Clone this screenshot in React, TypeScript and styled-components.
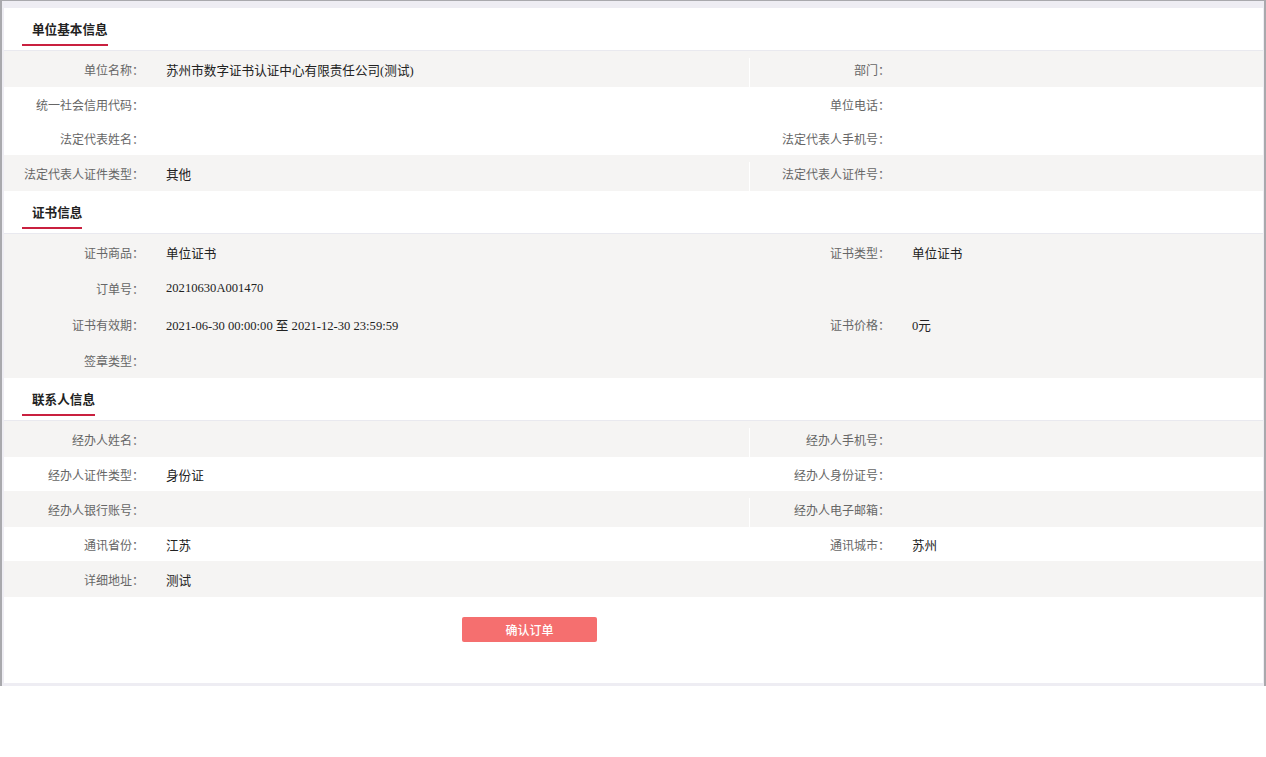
import React from "react";
import styled, { createGlobalStyle, css } from "styled-components";

const GlobalStyle = createGlobalStyle`
  html, body {
    margin: 0;
    padding: 0;
    background: #fff;
  }
  body {
    font-family: "Liberation Serif", "Noto Sans CJK SC", serif;
  }
`;

const Frame = styled.div`
  width: 1266px;
  box-sizing: border-box;
  border-top: 1px solid #a9a9ad;
  border-left: 2px solid #a9a9ad;
  border-right: 2px solid #a9a9ad;
  background: #eeedf3;
  padding: 7px 1px 3px 2px;
`;

const Content = styled.div`
  background: #fff;
`;

const SectionHeader = styled.div`
  height: 42px;
  border-bottom: 1px solid #e9e9ef;
  display: flex;
  align-items: flex-start;
`;

const Title = styled.h3`
  margin: 0 0 0 18px;
  padding: 12px 0 6px 10px;
  line-height: 18px;
  font-size: 12.6px;
  font-weight: bold;
  color: #222;
  font-family: "Noto Sans CJK SC", sans-serif;
  border-bottom: 2px solid #c9203f;
`;

const Row = styled.div<{ $gray?: boolean }>`
  display: flex;
  align-items: center;
  height: ${(p) => (p.$gray ? 36 : 34)}px;
  background: ${(p) => (p.$gray ? "#f5f4f3" : "#fff")};
`;

const Half = styled.div<{ $right?: boolean; $divider?: boolean }>`
  position: relative;
  display: flex;
  align-items: center;
  height: 100%;
  ${(p) =>
    p.$right
      ? css`
          flex: 1;
          padding-left: 1px;
        `
      : css`
          width: 745px;
          flex: none;
        `}
  ${(p) =>
    p.$divider &&
    css`
      &::before {
        content: "";
        position: absolute;
        left: 0;
        top: 7px;
        bottom: 0;
        width: 1px;
        background: #fff;
      }
    `}
`;

const Label = styled.span`
  width: 140px;
  flex: none;
  text-align: right;
  font-size: 12px;
  color: #666;
  font-family: "Noto Sans CJK SC", sans-serif;
  white-space: nowrap;
`;

const Value = styled.span`
  padding-left: 22px;
  font-size: 12.6px;
  color: #222;
  white-space: nowrap;
`;

const Footer = styled.div`
  height: 86px;
  box-sizing: border-box;
  padding: 20px 0 0 458px;
`;

const ConfirmButton = styled.button`
  width: 135px;
  height: 25px;
  border: none;
  border-radius: 2px;
  background: #f56f6f;
  color: #fff;
  font-size: 12px;
  font-weight: 500;
  font-family: "Noto Sans CJK SC", sans-serif;
  cursor: pointer;
  padding: 0;
`;

type Cell = [string, string?];
type RowData = { gray?: boolean; divider?: boolean; left: Cell; right?: Cell };

const unitRows: RowData[] = [
  { gray: true, divider: true, left: ["单位名称：", "苏州市数字证书认证中心有限责任公司(测试)"], right: ["部门："] },
  { left: ["统一社会信用代码："], right: ["单位电话："] },
  { left: ["法定代表姓名："], right: ["法定代表人手机号："] },
  { gray: true, divider: true, left: ["法定代表人证件类型：", "其他"], right: ["法定代表人证件号："] },
];

const certRows: RowData[] = [
  { gray: true, left: ["证书商品：", "单位证书"], right: ["证书类型：", "单位证书"] },
  { gray: true, left: ["订单号：", "20210630A001470"] },
  { gray: true, left: ["证书有效期：", "2021-06-30 00:00:00 至 2021-12-30 23:59:59"], right: ["证书价格：", "0元"] },
  { gray: true, left: ["签章类型："] },
];

const contactRows: RowData[] = [
  { gray: true, divider: true, left: ["经办人姓名："], right: ["经办人手机号："] },
  { left: ["经办人证件类型：", "身份证"], right: ["经办人身份证号："] },
  { gray: true, divider: true, left: ["经办人银行账号："], right: ["经办人电子邮箱："] },
  { left: ["通讯省份：", "江苏"], right: ["通讯城市：", "苏州"] },
  { gray: true, left: ["详细地址：", "测试"] },
];

function InfoSection({ title, rows }: { title: string; rows: RowData[] }) {
  return (
    <section>
      <SectionHeader>
        <Title>{title}</Title>
      </SectionHeader>
      {rows.map((r, i) => (
        <Row key={i} $gray={r.gray}>
          <Half>
            <Label>{r.left[0]}</Label>
            {r.left[1] && <Value>{r.left[1]}</Value>}
          </Half>
          <Half $right $divider={r.divider}>
            {r.right && <Label>{r.right[0]}</Label>}
            {r.right && r.right[1] && <Value>{r.right[1]}</Value>}
          </Half>
        </Row>
      ))}
    </section>
  );
}

export default function App() {
  return (
    <>
      <GlobalStyle />
      <Frame>
        <Content>
          <InfoSection title="单位基本信息" rows={unitRows} />
          <InfoSection title="证书信息" rows={certRows} />
          <InfoSection title="联系人信息" rows={contactRows} />
          <Footer>
            <ConfirmButton>确认订单</ConfirmButton>
          </Footer>
        </Content>
      </Frame>
    </>
  );
}
